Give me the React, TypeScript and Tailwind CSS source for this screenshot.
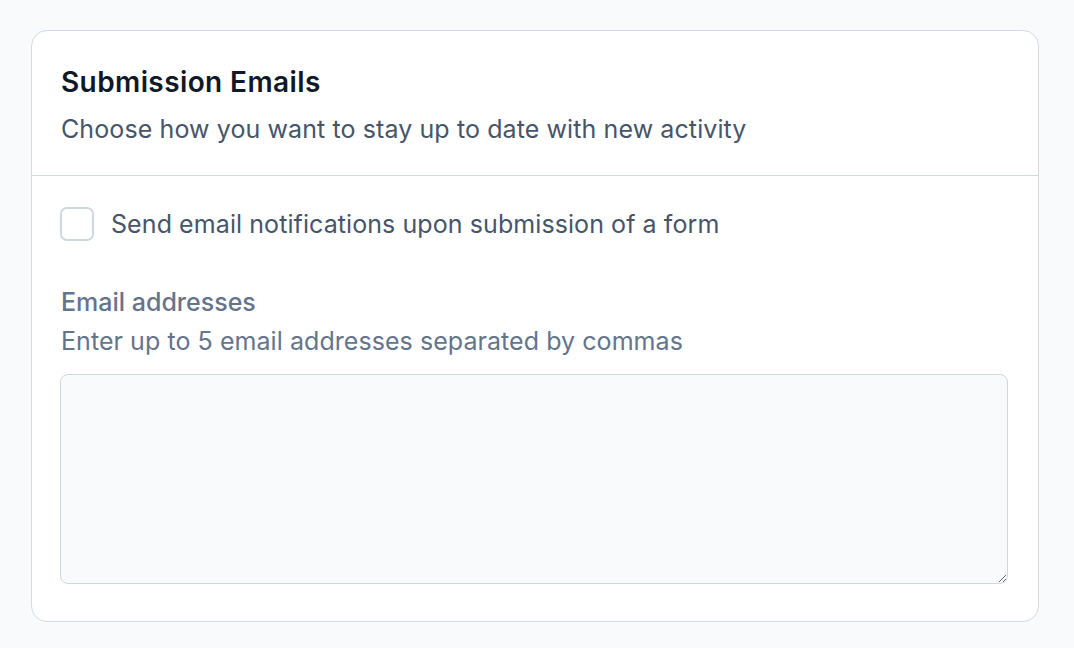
import React from "react";

export default function App() {
  return (
    <div className="min-h-screen bg-[#f8fafc] pt-[30px] pl-[31px] pr-[35px] pb-[26px]" style={{ fontFamily: "Inter, 'Noto Sans', sans-serif" }}>
      <div className="rounded-[16px] border border-[#d3dae4] bg-white">
        <div className="pl-[29px] pr-[29px] pt-[33px] pb-[28px] border-b border-[#d3dae4]">
          <h2 className="text-[28px] leading-[36px] font-semibold tracking-[0.4px] text-[#111827]">Submission Emails</h2>
          <p className="mt-[11px] text-[25px] leading-[36px] tracking-[0.1px] text-[#475569]">Choose how you want to stay up to date with new activity</p>
        </div>
        <div className="pl-[28px] pr-[30px] pt-[30px] pb-[37px]">
          <label className="flex items-center gap-[17px]">
            <span className="w-[34px] h-[34px] rounded-[7px] border-2 border-[#cfd7e2] bg-white shrink-0"></span>
            <span className="text-[25px] leading-[36px] tracking-[0.08px] text-[#475569]">Send email notifications upon submission of a form</span>
          </label>
          <div className="mt-[42px] pl-px text-[25px] leading-[36px] font-medium text-[#64748b]">Email addresses</div>
          <div className="mt-[3px] pl-px text-[25px] leading-[36px] tracking-[0.06px] text-[#64748b]">Enter up to 5 email addresses separated by commas</div>
          <textarea className="mt-[15px] block w-full h-[210px] rounded-[8px] border border-[#cfd7e2] bg-[#f8fafc] outline-none"></textarea>
        </div>
      </div>
    </div>
  );
}
